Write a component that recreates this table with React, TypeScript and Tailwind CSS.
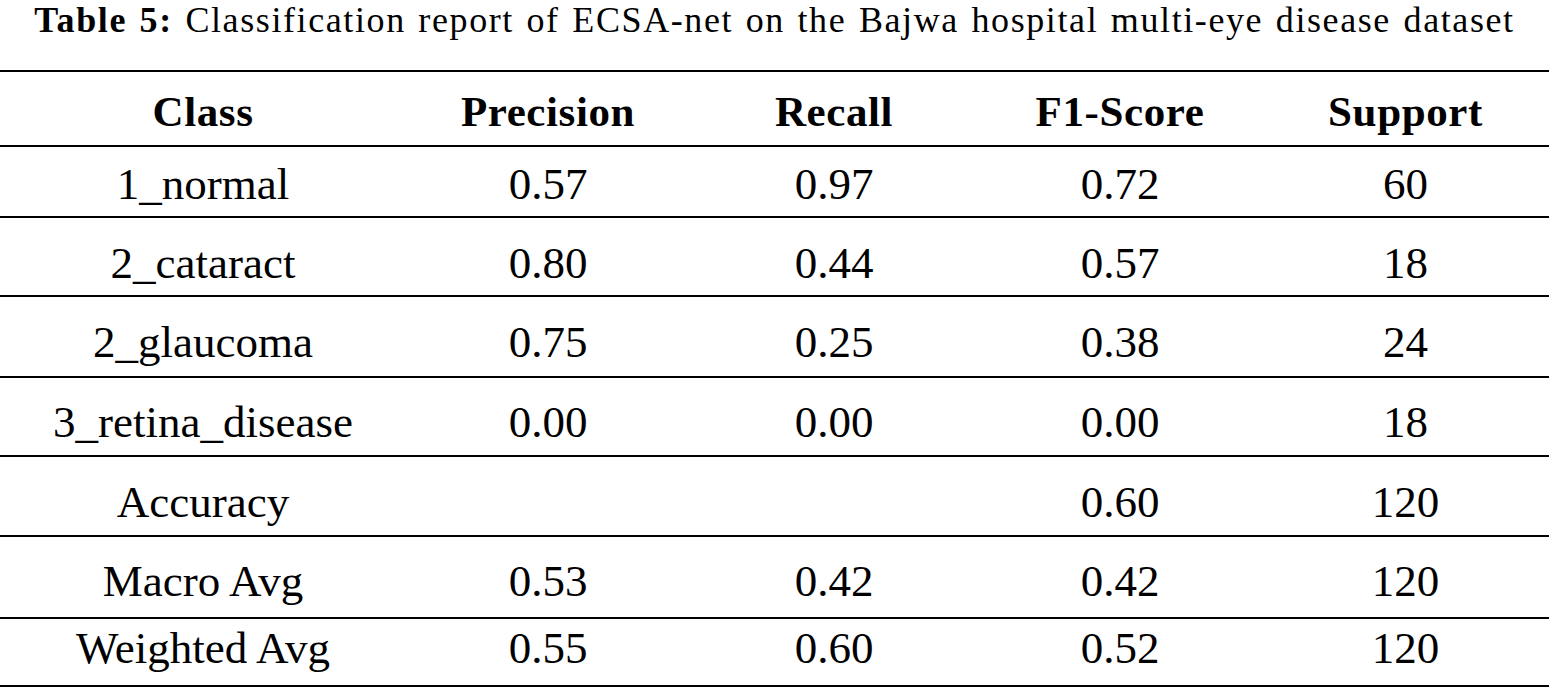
const columns = ["Class", "Precision", "Recall", "F1-Score", "Support"]

// heights include the 2px rule under each row
const rows = [
  { cells: ["1_normal", "0.57", "0.97", "0.72", "60"], h: "h-[71px]", pad: "pt-[5px]" },
  { cells: ["2_cataract", "0.80", "0.44", "0.57", "18"], h: "h-[79px]", pad: "pt-[13px]" },
  { cells: ["2_glaucoma", "0.75", "0.25", "0.38", "24"], h: "h-[81px]", pad: "pt-[11px]" },
  { cells: ["3_retina_disease", "0.00", "0.00", "0.00", "18"], h: "h-[79px]", pad: "pt-[11px]" },
  { cells: ["Accuracy", "", "", "0.60", "120"], h: "h-[80px]", pad: "pt-[12px]" },
  { cells: ["Macro Avg", "0.53", "0.42", "0.42", "120"], h: "h-[82px]", pad: "pt-[8px]" },
  { cells: ["Weighted Avg", "0.55", "0.60", "0.52", "120"], h: "h-[68px]", pad: "pb-[8px]" },
]

// column widths add up to the 1549px page
const colWidths = ["w-[406px]", "w-[284px]", "w-[288px]", "w-[284px]", "w-[287px]"]

export default function App() {
  return (
    <div className="w-[1549px] h-[687px] bg-white text-black font-['Liberation_Serif',serif] overflow-hidden">
      {/* caption */}
      <div className="h-[70px] pt-[2px] text-center text-[36px] tracking-[1.6px] [word-spacing:2px] leading-none whitespace-nowrap">
        <span className="font-bold">Table 5:</span> Classification report of ECSA-net on the Bajwa hospital multi-eye disease dataset
      </div>

      <div className="border-t-2 border-black">
        {/* header */}
        <div className="flex h-[75px] pt-[5px] items-center border-b-2 border-black text-[43px] tracking-[0.6px] font-bold leading-none">
          {columns.map((c, i) => (
            <div key={c} className={`${colWidths[i]} text-center`}>
              {c}
            </div>
          ))}
        </div>

        {rows.map((row) => (
          <div
            key={row.cells[0]}
            className={`flex items-center border-b-2 border-black text-[45px] leading-none ${row.h} ${row.pad}`}
          >
            {row.cells.map((cell, i) => (
              <div key={i} className={`${colWidths[i]} text-center`}>
                {cell}
              </div>
            ))}
          </div>
        ))}
      </div>
    </div>
  )
}
